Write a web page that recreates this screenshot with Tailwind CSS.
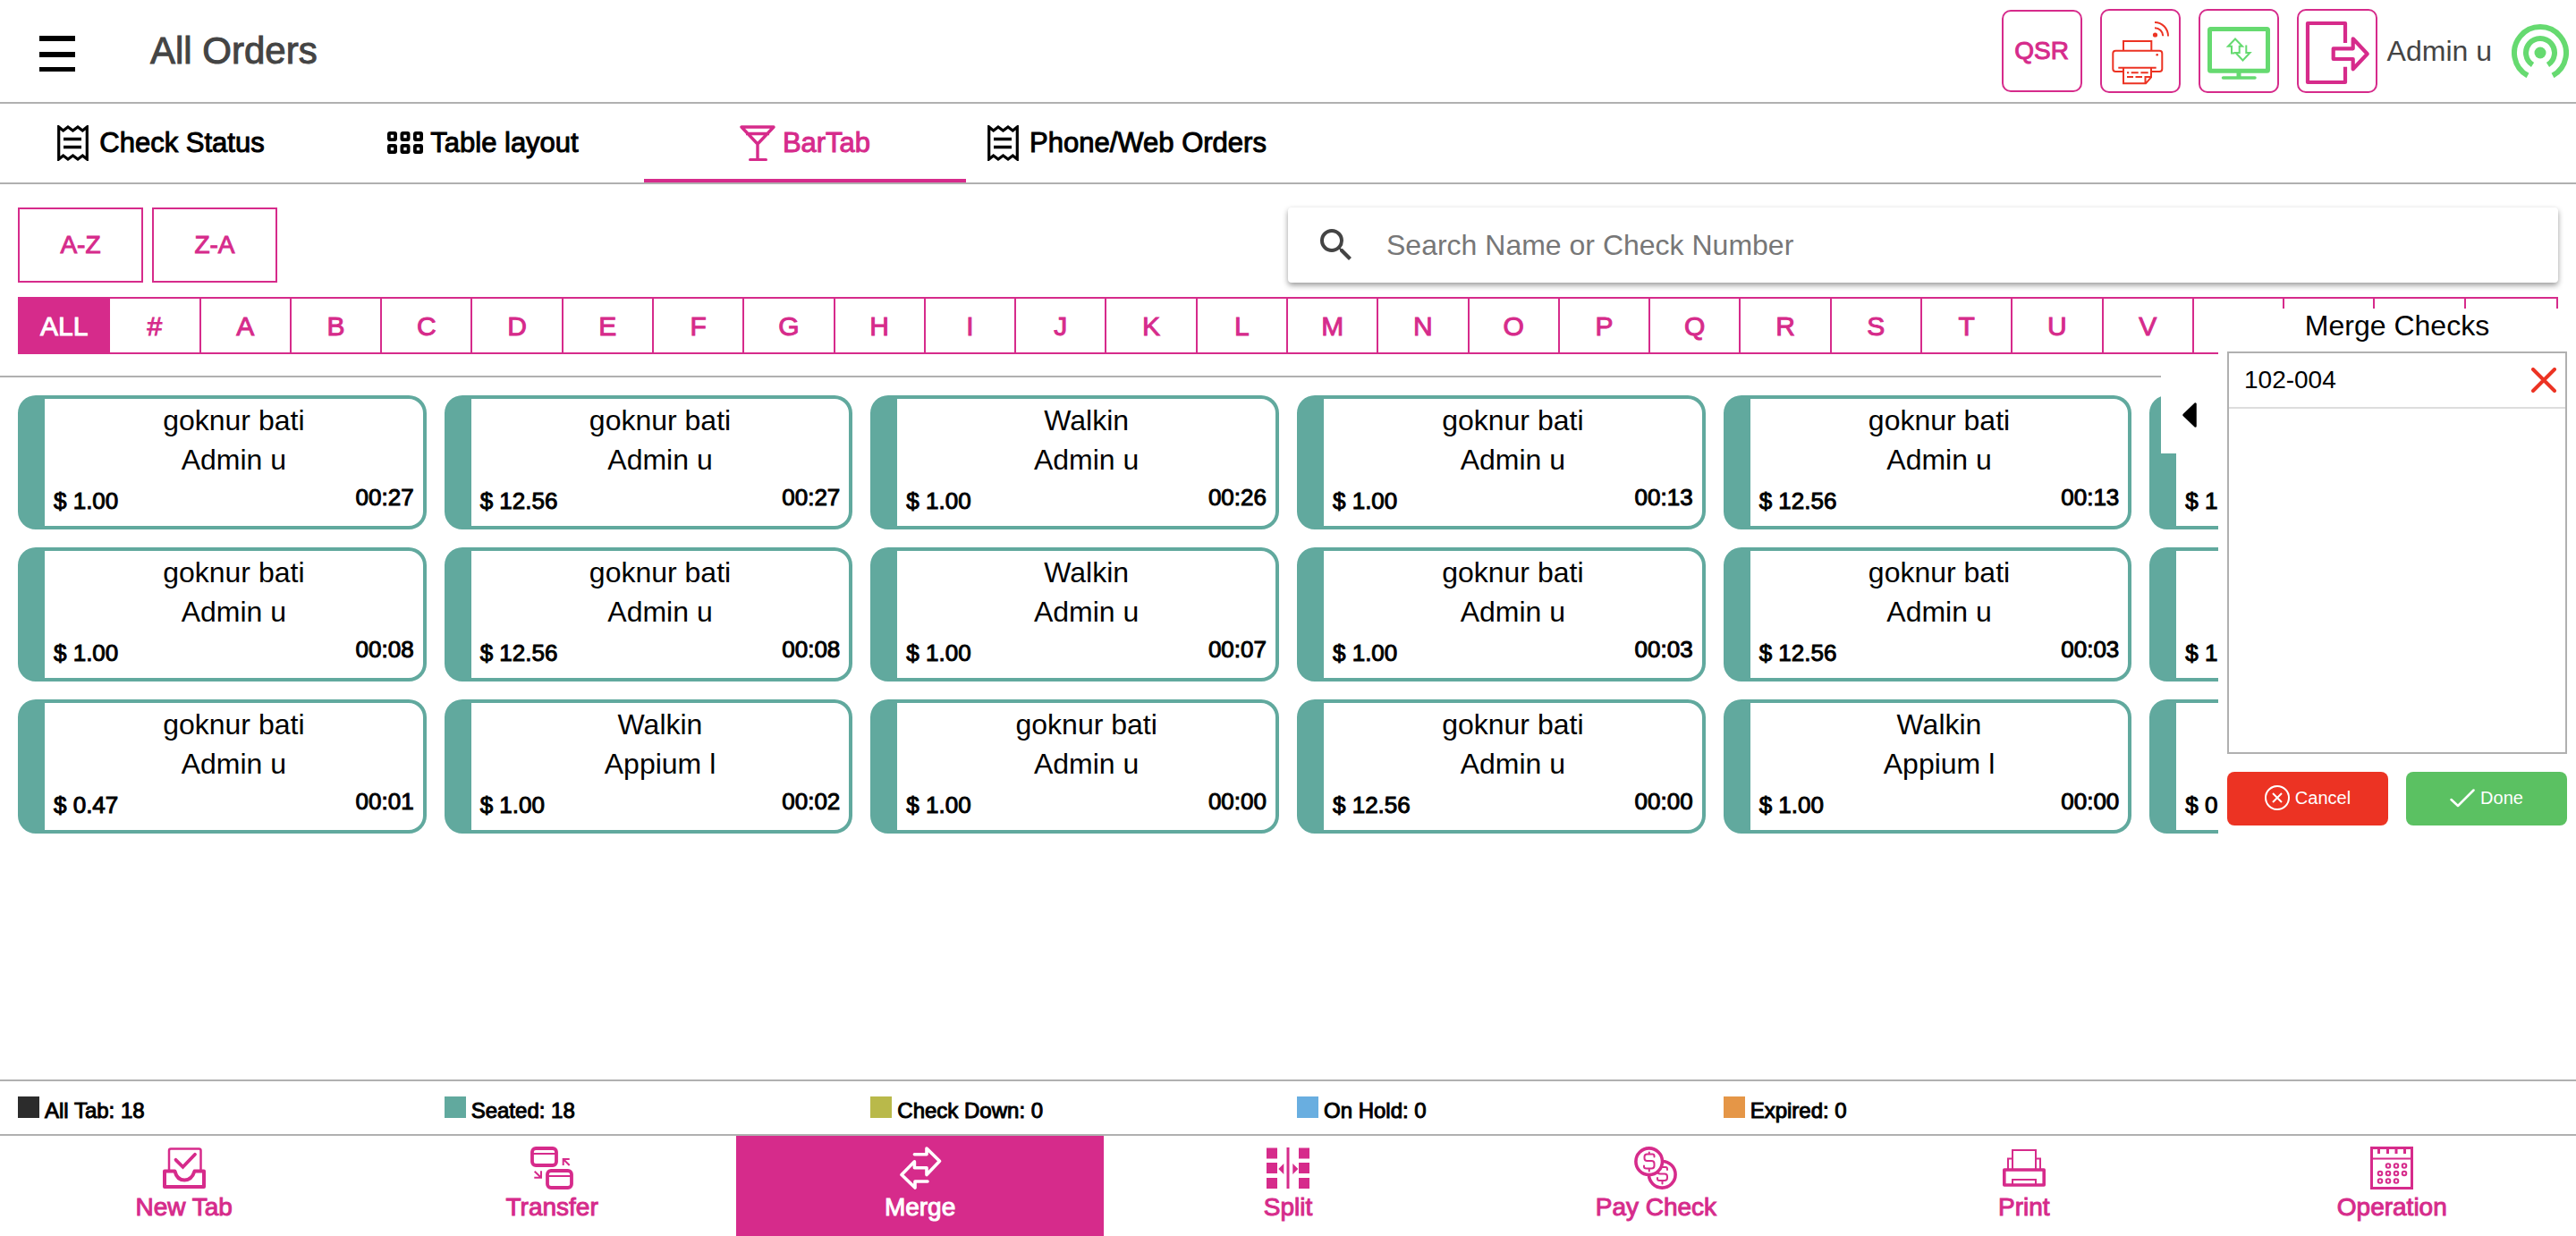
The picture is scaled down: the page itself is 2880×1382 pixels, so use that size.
<!DOCTYPE html>
<html lang="en">
<head>
<meta charset="utf-8">
<meta name="viewport" content="width=device-width, initial-scale=1">
<title>All Orders</title>
<script src="https://cdn.jsdelivr.net/npm/@tailwindcss/browser@4"></script>
</head>
<body class="flex min-h-screen flex-col bg-white font-['Liberation_Sans',Arial,sans-serif] text-black">

<header class="flex h-[116px] shrink-0 items-center justify-between border-b-2 border-[#b0b0b0] pr-2 pl-11">
  <div class="flex items-center gap-21">
    <button type="button" aria-label="Menu">
      <svg class="h-[46px] w-10" viewBox="0 0 40 46"><path d="M0 6h40v6H0zM0 24h40v6H0zM0 41h40v5H0z"/></svg>
    </button>
    <h1 class="text-[42px] leading-[48px] text-[#444] [-webkit-text-stroke:1px]">All Orders</h1>
  </div>
  <div class="flex items-center gap-5">
    <button type="button" class="h-[92px] w-[90px] rounded-[10px] border-2 border-[#d62b8b] text-[28px] text-[#d62b8b] [-webkit-text-stroke:1px]">QSR</button>
    <button type="button" aria-label="Printer status" class="h-[94px] w-[90px] rounded-[10px] border-2 border-[#d62b8b]">
      <svg class="h-full w-full" viewBox="0 0 86 90" fill="none" stroke="#ec3323" stroke-width="2">
        <circle cx="59.5" cy="27" r="2.6" fill="#ec3323" stroke="none"/>
        <path d="M59 19.2c5 0 9 4 9.300 9M59 13c8.500 0 15 7 15 15.500"/>
        <path d="M24 44.500V34h31.300v10.500M24 68h-8.700a3 3 0 0 1-3-3V47.700a3 3 0 0 1 3-3h49a3 3 0 0 1 3 3V65a3 3 0 0 1-3 3h-9.300M18.300 63.700h42.400M24 63.700v17.600h25l6-7V63.700M48.500 81.300V74H55"/>
        <path d="M28 69.300h2.200m2.500 0h8m2.700 0h8.300M28 74h7m2.500 0h7.500"/>
        <circle cx="61.700" cy="49.300" r="1.300" fill="#ec3323" stroke="none"/>
      </svg>
    </button>
    <button type="button" aria-label="Sync status" class="h-[94px] w-[90px] rounded-[10px] border-2 border-[#d62b8b]">
      <svg class="h-full w-full" viewBox="0 0 86 90" fill="none" stroke="#66da70">
        <rect x="10.500" y="20.500" width="65" height="46.700" rx="1" stroke-width="5"/>
        <path d="M43 69v6" stroke-width="5"/><path d="M25.500 75h35.500" stroke-width="3.500" stroke-linecap="round"/>
        <path d="M35 48.500v-8.800h-4L39 31.500l8 8.200h-3.300v7.300h-4.200l8 8.500 8-8.500h-4.200v-8.500M35 47.500h3.500" stroke-width="2"/>
      </svg>
    </button>
    <div class="flex items-center gap-[11px] pr-[2px]">
      <button type="button" aria-label="Sign out" class="h-[94px] w-[90px] rounded-[10px] border-2 border-[#d62b8b]">
        <svg class="h-full w-full" viewBox="0 0 86 90" fill="none" stroke="#d62b8b" stroke-width="4.200" stroke-linejoin="round">
          <path d="M52 36V14H10v66h42V62.700"/><path d="M38.700 42.300h22v-11l16 17-16 17V54h-22z"/>
        </svg>
      </button>
      <span class="text-[32px] leading-10 text-[#444]">Admin u</span>
    </div>
    <svg class="h-[60px] w-16" viewBox="0 0 64 60" fill="none" stroke="#66da70" stroke-width="6" role="img" aria-label="Connected">
      <path d="M18 57.500a29 29 0 1 1 28 0M23.500 45.500a16 16 0 1 1 17 0"/><circle cx="32" cy="32" r="6.500" fill="#66da70" stroke="none"/>
    </svg>
  </div>
</header>

<nav aria-label="Order views" class="grid h-[90px] shrink-0 grid-cols-8 border-b-2 border-[#b0b0b0] text-[31px] leading-9">
  <a href="#" class="flex items-center justify-center gap-3 border-b-4 border-transparent pt-1 whitespace-nowrap">
    <svg class="h-10 w-[35px]" viewBox="0 0 35 40" fill="none" stroke="#000"><path d="M1.700 2l5 4 5.300-4 5.500 4L23 2l5.300 4 5-4v36l-5-4-5.300 4-5.500-4-5.500 4-5.300-4-5 4z" stroke-width="3.200"/><path d="M7 15.500h20M7 24.500h20" stroke-width="3.400"/></svg>
    <span class="[-webkit-text-stroke:1px]">Check Status</span>
  </a>
  <a href="#" class="flex items-center justify-center gap-2 border-b-4 border-transparent pt-1 whitespace-nowrap">
    <svg class="h-10 w-10" viewBox="0 0 40 40" fill="none" stroke="#000" stroke-width="3.800"><rect x="1.900" y="8.900" width="7.200" height="7.200" rx="1"/><rect x="16.400" y="8.900" width="7.200" height="7.200" rx="1"/><rect x="30.900" y="8.900" width="7.200" height="7.200" rx="1"/><rect x="1.900" y="22.900" width="7.200" height="7.200" rx="1"/><rect x="16.400" y="22.900" width="7.200" height="7.200" rx="1"/><rect x="30.900" y="22.900" width="7.200" height="7.200" rx="1"/></svg>
    <span class="[-webkit-text-stroke:1px]">Table layout</span>
  </a>
  <a href="#" aria-current="page" class="flex items-center justify-center gap-2 border-b-4 border-[#d62b8b] pt-1 whitespace-nowrap text-[#d62b8b]">
    <svg class="h-10 w-10" viewBox="0 0 40 40" fill="none" stroke="#d62b8b" stroke-width="3.400" stroke-linejoin="round"><path d="M2 2h36L20 21zM7 9.500h26M20 20v18"/><path d="M11.500 38.500h18" stroke-width="3" stroke-linecap="round"/></svg>
    <span class="[-webkit-text-stroke:1px]">BarTab</span>
  </a>
  <a href="#" class="flex items-center justify-center gap-3 border-b-4 border-transparent pt-1 whitespace-nowrap">
    <svg class="h-10 w-[35px]" viewBox="0 0 35 40" fill="none" stroke="#000"><path d="M1.700 2l5 4 5.300-4 5.500 4L23 2l5.300 4 5-4v36l-5-4-5.300 4-5.500-4-5.500 4-5.300-4-5 4z" stroke-width="3.200"/><path d="M7 15.500h20M7 24.500h20" stroke-width="3.400"/></svg>
    <span class="[-webkit-text-stroke:1px]">Phone/Web Orders</span>
  </a>
</nav>

<main class="relative flex-1 overflow-hidden pt-[26px]">
  <div class="grid grid-cols-2 px-5">
    <div class="flex gap-[10px] text-[28px] text-[#d62b8b]">
      <button type="button" class="h-[84px] w-[140px] border-2 border-[#d62b8b] [-webkit-text-stroke:1px]">A-Z</button>
      <button type="button" class="h-[84px] w-[140px] border-2 border-[#d62b8b] [-webkit-text-stroke:1px]">Z-A</button>
    </div>
    <label class="flex h-[84px] items-center gap-8 rounded-sm bg-white pl-[30px] shadow-[0_3px_6px_rgba(0,0,0,0.4)]">
      <svg class="h-12 w-12" viewBox="0 0 24 24" fill="#444" aria-hidden="true"><path d="M15.500 14h-.79l-.28-.27A6.471 6.471 0 0 0 16 9.500 6.500 6.500 0 1 0 9.500 16c1.610 0 3.090-.59 4.230-1.570l.27.28v.79l5 4.990L20.490 19l-4.990-5zm-6 0C7.010 14 5 11.990 5 9.500S7.010 5 9.500 5 14 7.010 14 9.500 11.990 14 9.500 14z"/></svg>
      <input type="search" aria-label="Search" placeholder="Search Name or Check Number" class="h-full flex-1 text-[32px] outline-none placeholder:text-[#777]">
    </label>
  </div>

  <div id="letters" class="mx-5 mt-4 grid h-16 grid-cols-[repeat(28,minmax(0,1fr))] border-2 border-[#d62b8b] text-[30px] text-[#d62b8b]"></div>

  <section id="orders" aria-label="Bar tabs" class="mt-6 grid grid-cols-6 gap-5 border-t-2 border-[#b0b0b0] px-5 pt-5"></section>

  <aside aria-label="Merge Checks" class="absolute top-[139px] right-0 bottom-0 w-[400px] bg-white px-[10px]">
    <button type="button" aria-label="Collapse panel" class="absolute top-[75px] right-full flex h-[87px] w-16 items-center justify-center bg-white">
      <svg class="h-7 w-4" viewBox="0 0 16 28"><path d="M1.500 14L14.500 1.500v25z" stroke="#000" stroke-width="2.500" stroke-linejoin="round"/></svg>
    </button>
    <h2 class="mb-[10px] text-center text-[32px] leading-[38px]">Merge Checks</h2>
    <ul class="mb-5 h-[450px] border-2 border-[#b0b0b0]">
      <li class="flex h-[62px] items-center justify-between border-b-2 border-[#ddd] pr-[10px] pl-[17px] text-[28px]">
        <span>102-004</span>
        <button type="button" aria-label="Remove 102-004"><svg class="h-7 w-7" viewBox="0 0 28 28"><path d="M2 2l24 24M26 2L2 26" stroke="#ec3323" stroke-width="4" stroke-linecap="round"/></svg></button>
      </li>
    </ul>
    <div class="grid grid-cols-2 gap-5 text-[20px] text-white">
      <button type="button" class="flex h-[60px] items-center justify-center gap-[6px] rounded-lg bg-[#ec3323] pb-[2px]">
        <svg class="h-7 w-7" viewBox="0 0 28 28" fill="none" stroke="#fff" stroke-width="2"><circle cx="14" cy="14" r="13"/><path d="M9 9l10 10M19 9L9 19"/></svg>Cancel</button>
      <button type="button" class="flex h-[60px] items-center justify-center gap-[6px] rounded-lg bg-[#5bc162] pb-[2px]">
        <svg class="h-7 w-7" viewBox="0 0 28 28" fill="none" stroke="#fff" stroke-width="2.500" stroke-linecap="round" stroke-linejoin="round"><path d="M1.500 16l7.500 7L26.500 5.500"/></svg>Done</button>
    </div>
  </aside>
</main>

<ul class="grid h-[63px] shrink-0 grid-cols-6 gap-5 border-y-2 border-[#b0b0b0] px-5 pt-[17px] text-2xl leading-7 [-webkit-text-stroke:1px]">
  <li class="flex items-baseline gap-[6px]"><i class="size-6 bg-[#2c2c2c]"></i>All Tab: 18</li>
  <li class="flex items-baseline gap-[6px]"><i class="size-6 bg-[#61a99e]"></i>Seated: 18</li>
  <li class="flex items-baseline gap-[6px]"><i class="size-6 bg-[#b9b94a]"></i>Check Down: 0</li>
  <li class="flex items-baseline gap-[6px]"><i class="size-6 bg-[#69aee0]"></i>On Hold: 0</li>
  <li class="flex items-baseline gap-[6px]"><i class="size-6 bg-[#e59647]"></i>Expired: 0</li>
</ul>

<nav aria-label="Tab actions" class="grid shrink-0 grid-cols-7 text-[28px] leading-10 text-[#d62b8b]">
  <button type="button" class="flex flex-col items-center py-3">
    <svg class="size-12" viewBox="0 0 48 48" fill="none" stroke="currentColor"><path d="M7 27V4.500a2 2 0 0 1 2-2h31.500a2 2 0 0 1 2 2V27" stroke-width="2.500"/><path d="M2 27.500h11.500C15 34 19 37.500 24.300 37.500S33.500 34 35.500 27.500H46V45H2z" stroke-width="4" stroke-linejoin="round"/><path d="M14.500 14.800l8 8 13.500-14" stroke-width="3.800" stroke-linecap="round"/></svg>
    <span class="[-webkit-text-stroke:1px]">New Tab</span></button>
  <button type="button" class="flex flex-col items-center py-3">
    <svg class="size-12" viewBox="0 0 48 48" fill="none" stroke="currentColor" stroke-width="3.800"><rect x="2" y="2" width="27" height="19" rx="4"/><rect x="19" y="27" width="27" height="19" rx="4"/><path d="M2 8h27M19 33h27" stroke-width="2"/><path d="M43.700 14h-7v7M36.700 14l7 7M4.300 34.700H12v-7.400M12 34.700l-7.300-7" stroke-width="2"/></svg>
    <span class="[-webkit-text-stroke:1px]">Transfer</span></button>
  <button type="button" class="flex flex-col items-center bg-[#d62b8b] py-3 text-white">
    <svg class="size-12" viewBox="0 0 48 48" fill="none" stroke="currentColor" stroke-width="3.600" stroke-linecap="round" stroke-linejoin="round"><path d="M17.400 8.700H31V2l14.500 14.300L31 31.500v-7.800H17.400v-7L3 31.500 18 46v-7h14"/></svg>
    <span class="[-webkit-text-stroke:1px]">Merge</span></button>
  <button type="button" class="flex flex-col items-center py-3">
    <svg class="size-12" viewBox="0 0 48 48" fill="currentColor"><path d="M0 1.500h12v12H0zM0 18h12v12H0zM0 35h12v12H0zM36 1.500h12v12H36zM36 18h12v12H36zM36 35h12v12H36zM22.500 1h3v46h-3zM13.300 25l6-6v12zM35.300 25l-6-6v12z"/></svg>
    <span class="[-webkit-text-stroke:1px]">Split</span></button>
  <button type="button" class="flex flex-col items-center py-3">
    <svg class="size-12" viewBox="0 0 48 48" fill="none" stroke="currentColor" stroke-width="2" stroke-linecap="round"><circle cx="31.300" cy="31.300" r="14.800" stroke-width="3.600"/><path d="M37 26v-1q0-2-2-2h-6q-3 0-3 3v1.500q0 3 3 3h5q3 0 3 3V35q0 3-3 3h-6q-2 0-2-2v-1M31.500 38.500v3"/><circle cx="16.700" cy="16.700" r="14.800" stroke-width="3.600" fill="#fff"/><path d="M22.500 11.500v-1q0-2-2-2h-6q-3 0-3 3V13q0 3 3 3h5q3 0 3 3v2.500q0 3-3 3h-6q-2.500 0-2.500-2v-1M16.800 6.500v2M16.800 24.500v3"/></svg>
    <span class="[-webkit-text-stroke:1px]">Pay Check</span></button>
  <button type="button" class="flex flex-col items-center py-3">
    <svg class="size-12" viewBox="0 0 48 48" fill="none" stroke="currentColor" stroke-width="2"><path d="M11 25V4h26v21M6 25V13.500h5M42 25V13.500h-5M11 43v-6h26v6"/><rect x="1.800" y="26" width="44.400" height="17" stroke-width="3.600" stroke-linejoin="round"/></svg>
    <span class="[-webkit-text-stroke:1px]">Print</span></button>
  <button type="button" class="flex flex-col items-center py-3">
    <svg class="size-12" viewBox="0 0 48 48" fill="none" stroke="currentColor" stroke-width="2"><rect x="1.500" y="1.500" width="45" height="45" stroke-width="3"/><path d="M1 13.500h46"/><path d="M9.500 2v6M19.500 2v6M29 2v6M38.500 2v6" stroke-width="3"/><circle cx="20" cy="21.500" r="2.300"/><circle cx="29" cy="21.500" r="2.300"/><circle cx="38" cy="21.500" r="2.300"/><circle cx="11" cy="30" r="2.300"/><circle cx="20" cy="30" r="2.300"/><circle cx="29" cy="30" r="2.300"/><circle cx="38" cy="30" r="2.300"/><circle cx="11" cy="38.500" r="2.300"/><circle cx="20" cy="38.500" r="2.300"/><circle cx="29" cy="38.500" r="2.300"/></svg>
    <span class="[-webkit-text-stroke:1px]">Operation</span></button>
</nav>

<script>
  // Alphabet filter
  document.getElementById('letters').innerHTML = ['ALL', '#', ...'ABCDEFGHIJKLMNOPQRSTUVWXYZ'].map((t, i) =>
    i === 0
      ? `<button type="button" aria-pressed="true" class="border-r-2 border-[#d62b8b] bg-[#d62b8b] text-white [-webkit-text-stroke:1px]">${t}</button>`
      : `<button type="button" class="border-r-2 border-[#d62b8b] last:border-r-0 [-webkit-text-stroke:1px]">${t}</button>`
  ).join('');

  // Open tabs: guest, server, amount, elapsed time
  const G = 'goknur bati', W = 'Walkin', A = 'Admin u', P = 'Appium l';
  const orders = [
    [G, A, '1.00', '00:27'], [G, A, '12.56', '00:27'], [W, A, '1.00', '00:26'], [G, A, '1.00', '00:13'], [G, A, '12.56', '00:13'], [W, A, '1.00', '00:12'],
    [G, A, '1.00', '00:08'], [G, A, '12.56', '00:08'], [W, A, '1.00', '00:07'], [G, A, '1.00', '00:03'], [G, A, '12.56', '00:03'], [W, A, '1.00', '00:02'],
    [G, A, '0.47', '00:01'], [W, P, '1.00', '00:02'], [G, A, '1.00', '00:00'], [G, A, '12.56', '00:00'], [W, P, '1.00', '00:00'], [G, A, '0.47', '00:00'],
  ];
  document.getElementById('orders').innerHTML = orders.map(([guest, server, amount, time]) => `
    <button type="button" class="flex h-[150px] flex-col rounded-[20px] border-4 border-l-[30px] border-[#61a99e] bg-white px-[10px] pt-[2px] text-[32px] leading-[44px]">
      <span class="w-full text-center">${guest}</span>
      <span class="w-full text-center">${server}</span>
      <span class="flex w-full items-start justify-between text-[26px] leading-8 [-webkit-text-stroke:1px]"><span class="pt-2">$ ${amount}</span><span class="pt-1">${time}</span></span>
    </button>`).join('');
</script>
</body>
</html>
